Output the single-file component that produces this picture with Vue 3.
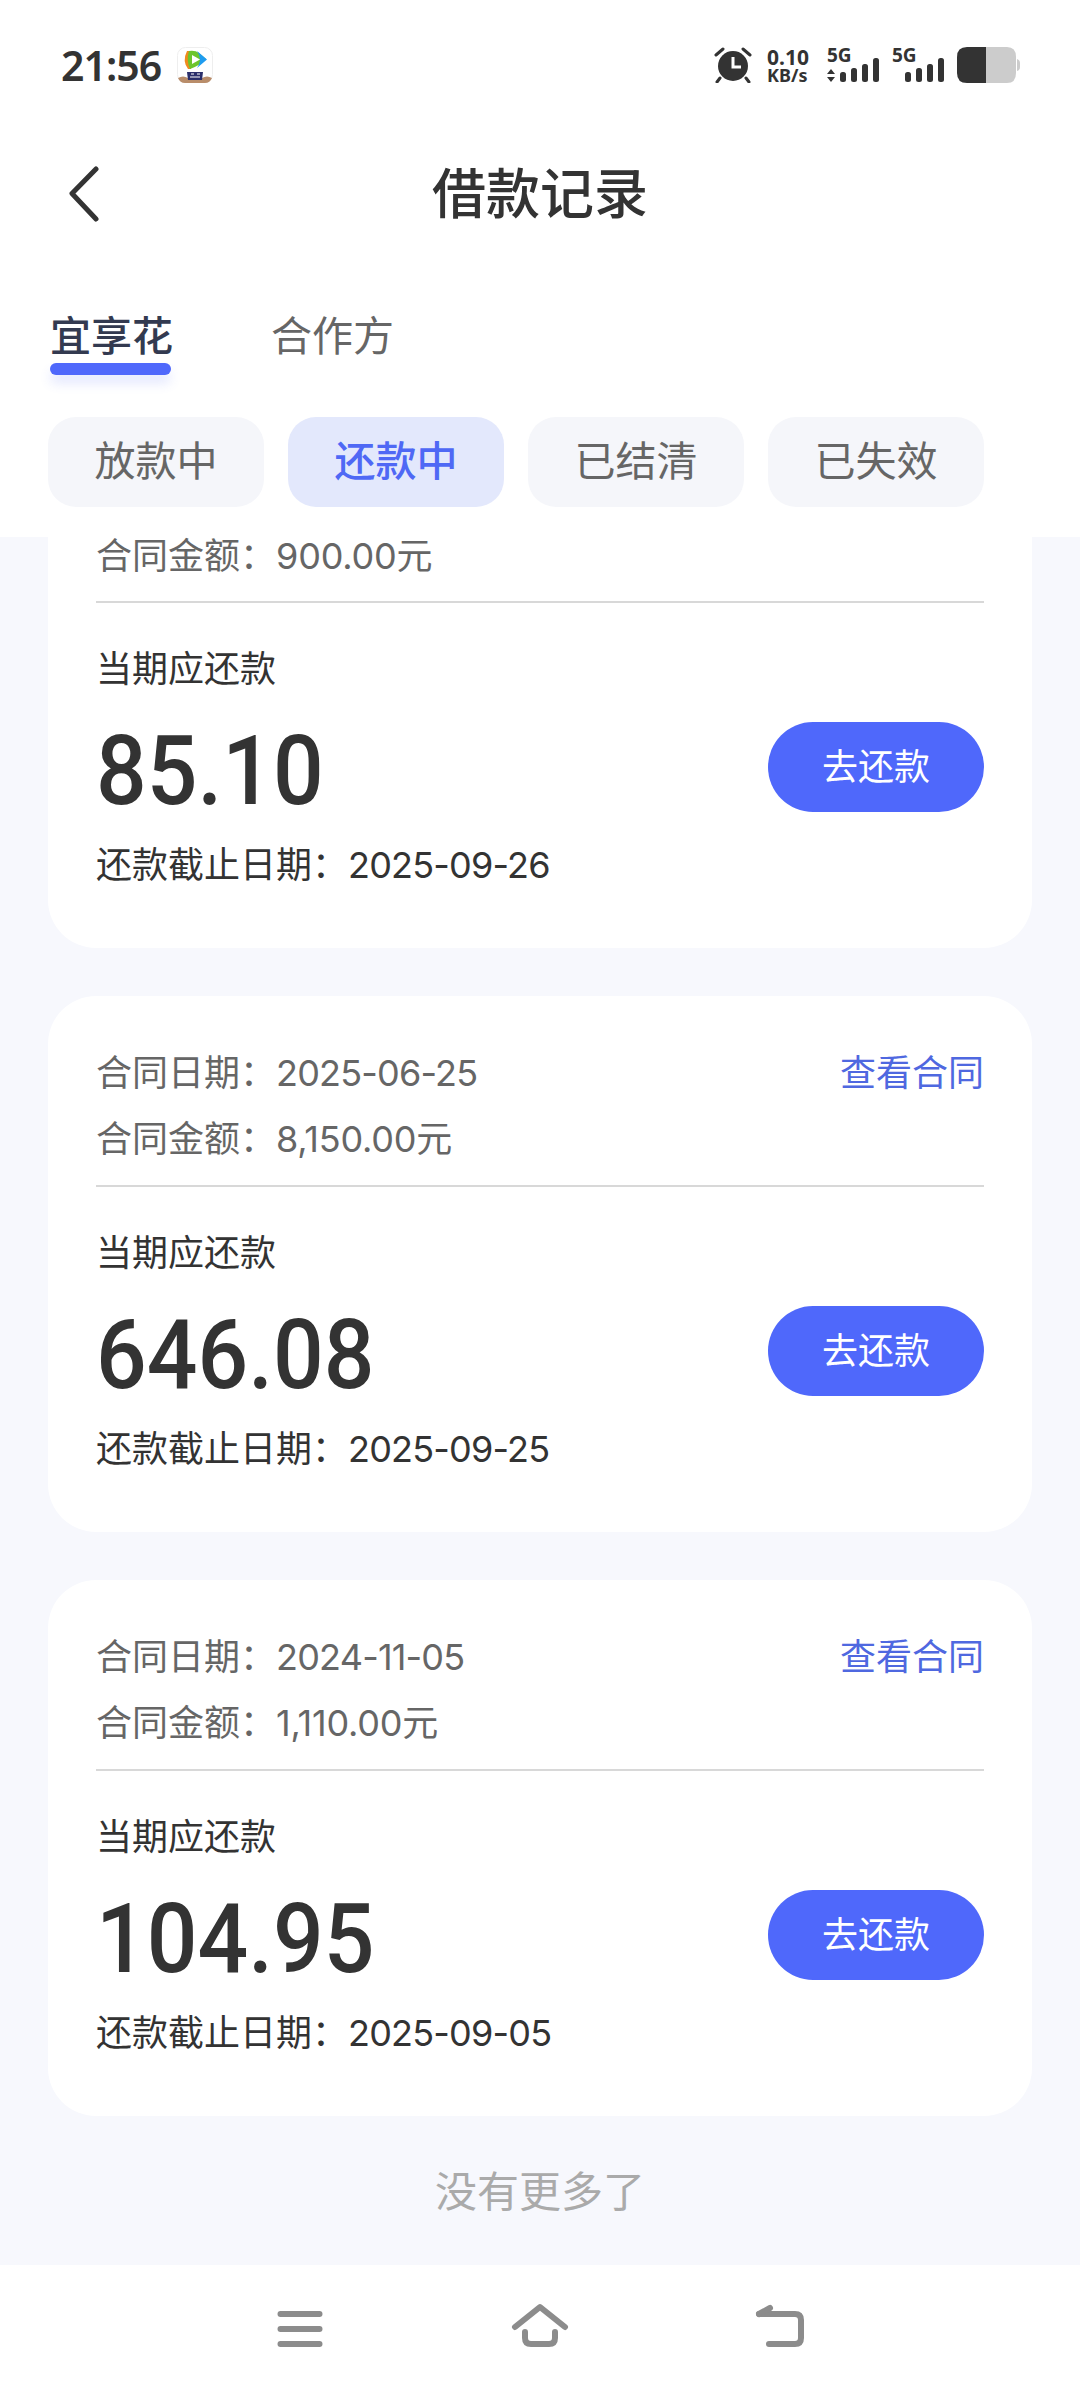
<template>
  <div class="page">
    <!-- 상단 흰색 영역 -->
    <div class="top">
      <div class="status">
        <div class="status-left">
          <span class="time">21:56</span>
          <svg class="app-icon" viewBox="0 0 36 36">
            <rect x="0.5" y="0.5" width="35" height="35" rx="8" fill="#fff" stroke="#eee" />
            <path d="M10 4 H16 L14 22 H11 Q5 14 10 4Z" fill="#f08a1d" />
            <path d="M12 4 Q18 3 22 6 L29 12 Q22 19 13 22 Q9 13 12 4Z" fill="#6cc52d" />
            <path d="M20 4 L30 12.500 L20 21 Q26 12.500 20 4Z" fill="#1e9cf0" />
            <path d="M15 8 L23 12.500 L15 17Z" fill="#fff" />
            <path d="M1 31 Q6 28 11 31 L25 31 Q30 28 35 31 Q33 36 28 36 L8 36 Q3 36 1 31Z" fill="#b98d6a" />
            <path d="M10 25 L26 25 L25 33 L11 33Z" fill="#2b2f6b" />
            <path d="M14 27 H17 M20 27 H23 M13 30 H23" stroke="#fff" stroke-width="1" />
          </svg>
        </div>
        <div class="status-right">
          <svg class="alarm" viewBox="0 0 38 36">
            <circle cx="19" cy="19" r="15" fill="#333" />
            <path d="M19 10 V20 H27" fill="none" stroke="#fff" stroke-width="3" />
            <path d="M2 8 L9 2 M29 2 L36 8 M6 31 L3 35 M32 31 L35 35" stroke="#333" stroke-width="3" stroke-linecap="round" />
          </svg>
          <div class="speed">
            <span class="speed-num">0.10</span>
            <span class="speed-unit">KB/s</span>
          </div>
          <div class="signal">
            <span class="five-g">5G</span>
            <svg class="bars" viewBox="0 0 56 25">
              <path d="M6 11 L10 16 H2Z M6 24 L2 19 H10Z" fill="#333" />
              <rect x="15" y="14" width="6" height="10" rx="2.500" fill="#333" />
              <rect x="26" y="10" width="6" height="14" rx="2.500" fill="#333" />
              <rect x="37" y="6" width="6" height="18" rx="2.500" fill="#333" />
              <rect x="48" y="0" width="6" height="24" rx="2.500" fill="#333" />
            </svg>
          </div>
          <div class="signal signal-2">
            <span class="five-g">5G</span>
            <svg class="bars" viewBox="0 0 56 25">
              <rect x="15" y="14" width="6" height="10" rx="2.500" fill="#333" />
              <rect x="26" y="10" width="6" height="14" rx="2.500" fill="#333" />
              <rect x="37" y="6" width="6" height="18" rx="2.500" fill="#333" />
              <rect x="48" y="0" width="6" height="24" rx="2.500" fill="#333" />
            </svg>
          </div>
          <svg class="battery" viewBox="0 0 64 36">
            <path d="M29 0 H10 Q0 0 0 10 V26 Q0 36 10 36 H29Z" fill="#333" />
            <path d="M29 0 H50 Q59 0 59 10 V26 Q59 36 50 36 H29Z" fill="#ccc" />
            <path d="M60 12 Q63 13 63 16 V20 Q63 23 60 24Z" fill="#ccc" />
          </svg>
        </div>
      </div>

      <div class="title-bar">
        <svg class="back" viewBox="0 0 32 56">
          <path d="M28 3 L4 27.500 L28 53" fill="none" stroke="#333" stroke-width="5" stroke-linecap="round" stroke-linejoin="round" />
        </svg>
        <h1 class="title">借款记录</h1>
      </div>

      <div class="tabs">
        <div v-for="t in tabs" :key="t.label" class="tab" :class="{ active: t.active }">{{ t.label }}</div>
      </div>

      <div class="chips">
        <div v-for="c in chips" :key="c.label" class="chip" :class="{ active: c.active }">{{ c.label }}</div>
      </div>
    </div>

    <!-- 목록 -->
    <div class="list">
      <div v-for="r in records" :key="r.due" class="card" :class="{ cut: !r.date }">
        <div v-if="r.date" class="row-between">
          <span class="meta">合同日期：<span class="num">{{ r.date }}</span></span>
          <span class="link">查看合同</span>
        </div>
        <div class="meta meta-amount">合同金额：<span class="num num-total">{{ r.total }}</span>元</div>
        <div class="divider"></div>
        <div class="label">当期应还款</div>
        <div class="row-between pay-row">
          <span class="amount">{{ r.amount }}</span>
          <button type="button" class="btn-pay">去还款</button>
        </div>
        <div class="due">还款截止日期：<span class="num">{{ r.due }}</span></div>
      </div>
      <div class="no-more">没有更多了</div>
    </div>

    <!-- 하단 내비게이션 -->
    <div class="nav">
      <svg class="nav-icon" viewBox="0 0 60 44">
        <path d="M10.500 7 H49.500 M10.500 22 H49.500 M10.500 37 H49.500" />
      </svg>
      <svg class="nav-icon" viewBox="0 0 60 44">
        <path d="M5 20 L30 0 L55 20" />
        <path d="M15 25 V31 Q15 37 21 37 H39 Q45 37 45 31 V25" />
      </svg>
      <svg class="nav-icon" viewBox="0 0 60 44">
        <path d="M9 7 H45 Q51 7 51 13 V31 Q51 37 45 37 H19" />
        <path d="M9 7 L20 1" />
      </svg>
    </div>
  </div>
</template>

<script setup>
const tabs = [
  { label: "宜享花", active: true },
  { label: "合作方", active: false },
];

const chips = [
  { label: "放款中", active: false },
  { label: "还款中", active: true },
  { label: "已结清", active: false },
  { label: "已失效", active: false },
];

const records = [
  { total: "900.00", amount: "85.10", due: "2025-09-26" },
  { date: "2025-06-25", total: "8,150.00", amount: "646.08", due: "2025-09-25" },
  { date: "2024-11-05", total: "1,110.00", amount: "104.95", due: "2025-09-05" },
];
</script>

<style>
body {
  background: #f7f8fd;
}
</style>

<style scoped>
.page {
  width: 1080px;
  height: 2392px;
  display: flex;
  flex-direction: column;
  overflow: hidden;
  background: #f7f8fd;
  font-family: "Noto Sans", "Noto Sans CJK SC", sans-serif;
  color: #333;
}

.top {
  height: 537px;
  flex: none;
  background: #fff;
}

/* 상태바 */
.status {
  height: 88px;
  padding: 42px 59px 0 61px;
  box-sizing: border-box;
  display: flex;
  justify-content: space-between;
  align-items: flex-start;
}

.status-left {
  display: flex;
  align-items: center;
  gap: 16px;
  margin-top: 5px;
}

.time {
  font-size: 41px;
  line-height: 36px;
  font-weight: 600;
  letter-spacing: -1px;
}

.app-icon {
  width: 36px;
  height: 36px;
}

.status-right {
  display: flex;
  align-items: flex-start;
  margin-top: 5px;
}

.alarm {
  width: 38px;
  height: 36px;
}

.speed {
  width: 46px;
  margin-left: 15px;
  display: flex;
  flex-direction: column;
  font-weight: 700;
}

.speed-num {
  font-size: 21px;
  line-height: 20px;
}

.speed-unit {
  font-size: 18px;
  line-height: 16px;
  white-space: nowrap;
}

.signal {
  width: 56px;
  margin-left: 12px;
  position: relative;
  height: 36px;
}

.signal-2 {
  margin-left: 9px;
}

.five-g {
  position: absolute;
  left: 2px;
  top: 0;
  font-size: 19px;
  line-height: 17px;
  font-weight: 700;
}

.bars {
  position: absolute;
  left: 0;
  top: 11px;
  width: 56px;
  height: 25px;
}

.battery {
  width: 64px;
  height: 36px;
  margin-left: 11px;
}

/* 타이틀 */
.title-bar {
  height: 212px;
  display: flex;
  align-items: center;
  justify-content: center;
  position: relative;
}

.back {
  position: absolute;
  left: 68px;
  top: 78px;
  width: 32px;
  height: 56px;
}

.title {
  margin: -2px 0 0;
  font-size: 54px;
  line-height: 70px;
  font-weight: 500;
  color: #333;
}

/* 탭 */
.tabs {
  margin-top: 7px;
  padding-left: 50px;
  display: flex;
  gap: 98px;
  height: 68px;
}

.tab {
  position: relative;
  font-size: 41px;
  line-height: 56px;
  color: #666;
  white-space: nowrap;
}

.tab.active {
  color: #333a50;
  font-weight: 500;
}

.tab.active::after {
  content: "";
  position: absolute;
  left: 0;
  top: 56px;
  width: 121px;
  height: 12px;
  border-radius: 6px;
  background: #4f68fb;
  box-shadow: 0 8px 12px rgba(79, 104, 251, 0.16);
}

/* 칩 */
.chips {
  margin-top: 42px;
  padding-left: 48px;
  display: flex;
  gap: 24px;
}

.chip {
  width: 216px;
  height: 90px;
  border-radius: 28px;
  background: #f5f6fa;
  color: #666;
  font-size: 41px;
  line-height: 86px;
  text-align: center;
}

.chip.active {
  background: #e3e8fc;
  color: #4f68f5;
  font-weight: 500;
}

/* 목록 */
.list {
  flex: 1;
  min-height: 0;
  overflow: hidden;
  display: flex;
  flex-direction: column;
  gap: 48px;
  padding: 0 48px;
}

.card {
  flex: none;
  padding: 54px 48px 60px;
  border-radius: 48px;
  background: #fff;
}

.card.cut {
  padding-top: 0;
  border-radius: 0 0 48px 48px;
}

.row-between {
  display: flex;
  justify-content: space-between;
  align-items: center;
}

.meta {
  font-size: 36px;
  line-height: 46px;
  color: #666;
}

.meta-amount {
  margin-top: 20px;
}

/* 첫 카드는 스크롤로 위가 잘린 상태 */
.card.cut .meta-amount {
  margin-top: 0;
  line-height: 38px;
  padding-bottom: 3px;
}

.num {
  font-family: Inter, "Noto Sans", sans-serif;
  letter-spacing: -0.8px;
}

.num-total {
  letter-spacing: -0.2px;
}

.link {
  font-size: 36px;
  line-height: 46px;
  color: #4f68e0;
}

.divider {
  height: 2px;
  margin-top: 23px;
  background: #d8d8d8;
}

.label {
  margin-top: 43px;
  font-size: 36px;
  line-height: 46px;
  color: #333;
}

.pay-row {
  margin-top: 30px;
}

.amount {
  display: inline-block;
  padding-top: 9px;
  font-family: Roboto, sans-serif;
  font-size: 97px;
  line-height: 81px;
  font-weight: 500;
  color: #333;
  transform: scaleX(0.92);
  transform-origin: left center;
}

.btn-pay {
  width: 216px;
  height: 90px;
  border: none;
  border-radius: 45px;
  background: #4f68fb;
  color: #fff;
  font-family: inherit;
  font-size: 36px;
  line-height: 90px;
  padding: 0;
}

.due {
  margin-top: 30px;
  font-size: 36px;
  line-height: 46px;
  color: #333;
}

.no-more {
  margin-top: -3px;
  text-align: center;
  font-size: 42px;
  line-height: 60px;
  color: #aaa;
}

/* 하단 내비게이션 */
.nav {
  flex: none;
  height: 127px;
  box-sizing: border-box;
  padding-top: 42px;
  background: #fff;
  display: flex;
  justify-content: center;
  align-items: flex-start;
  gap: 180px;
}

.nav-icon {
  width: 60px;
  height: 44px;
  overflow: visible;
  fill: none;
  stroke: #8c8c8c;
  stroke-width: 6;
  stroke-linecap: round;
  stroke-linejoin: round;
}
</style>
